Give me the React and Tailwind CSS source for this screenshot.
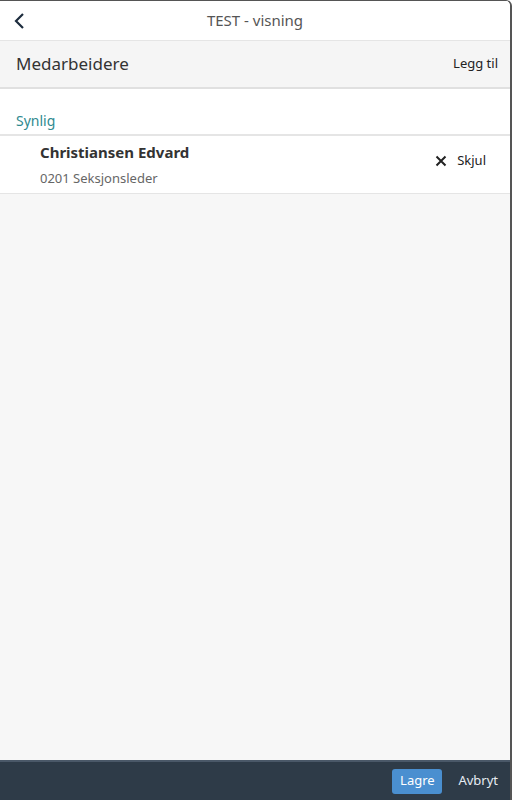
import React from 'react';

const font = { fontFamily: '"Noto Sans", Arial, sans-serif' };

export default function App() {
  return (
    <div className="flex h-[800px] w-[512px] flex-col overflow-hidden rounded-tr-md border-t border-r-2 border-[#555] bg-[#f7f7f7]" style={font}>
      <header className="relative flex h-[40px] shrink-0 items-center justify-center border-b border-[#e5e5e5] bg-white">
        <button type="button" className="absolute left-[13px] top-[11px] text-[#1d2d3e]">
          <svg width="14" height="18" viewBox="0 0 14 18" fill="none" stroke="currentColor" strokeWidth="2.2">
            <path d="M10 2 L3 9 L10 16" />
          </svg>
        </button>
        <span className="text-[15px] text-[#555]">TEST - visning</span>
      </header>

      <div className="flex h-[48px] shrink-0 items-center justify-between border-b-2 border-[#e0e0e0] bg-[#f5f5f5] pl-4 pr-[12px]">
        <span className="text-[17px] text-[#333]">Medarbeidere</span>
        <button type="button" className="text-[13px] text-[#222]">Legg til</button>
      </div>

      <div className="flex h-[47px] shrink-0 items-end border-b-2 border-[#e5e5e5] bg-white pb-[3px] pl-4">
        <span className="text-[14px] text-[#2f8a8f]">Synlig</span>
      </div>

      <div className="flex h-[58px] shrink-0 items-start justify-between border-b border-[#e5e5e5] bg-white pl-10 pr-[24px] pt-[6px]">
        <div className="flex flex-col">
          <span className="text-[15px] font-bold leading-[20px] text-[#333]">Christiansen Edvard</span>
          <span className="mt-[7px] text-[13px] leading-[18px] text-[#666]">0201 Seksjonsleder</span>
        </div>
        <button type="button" className="mt-[9px] flex items-center gap-[10px] text-[13px] text-[#222]">
          <svg width="12" height="12" viewBox="0 0 12 12" stroke="currentColor" strokeWidth="2">
            <path d="M1.5 1.5 L10.5 10.5 M10.5 1.5 L1.5 10.5" />
          </svg>
          Skjul
        </button>
      </div>

      <div className="flex-1" />

      <footer className="flex h-[40px] shrink-0 items-center justify-end gap-4 border-t-2 border-[#4a5868] bg-[#2e3b48] pr-[12px]">
        <button type="button" className="h-[25px] w-[50px] rounded-[3px] bg-[#4a8fd0] text-[13px] text-white">Lagre</button>
        <button type="button" className="text-[13px] text-[#e6ecf2]">Avbryt</button>
      </footer>
    </div>
  );
}
